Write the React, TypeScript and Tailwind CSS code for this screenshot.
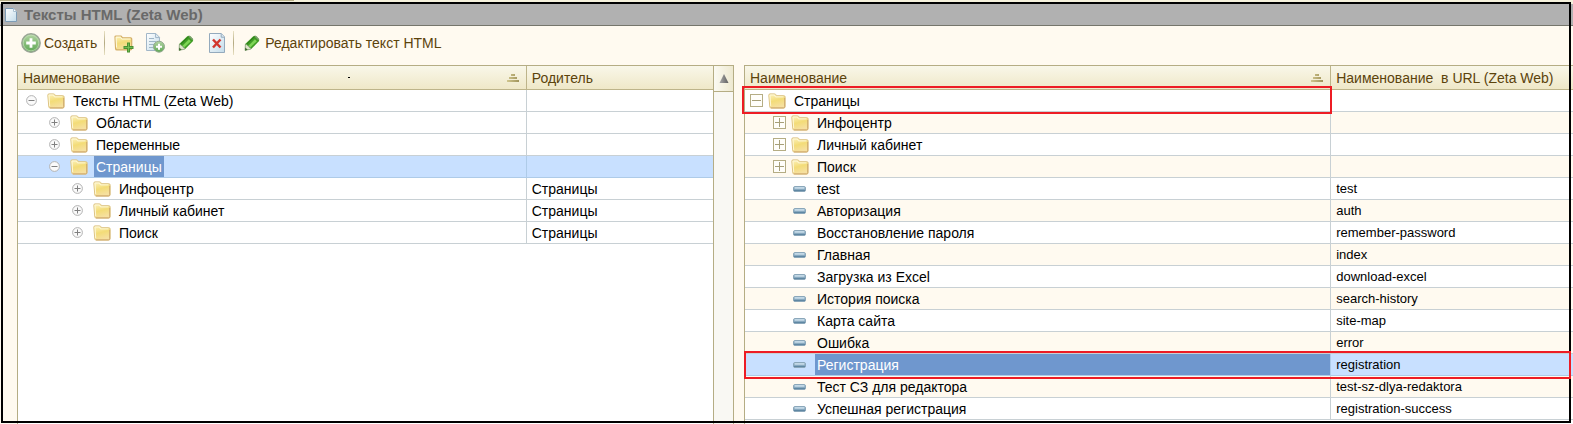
import { ReactNode } from "react";

type Row = {
  name: string;
  value?: string;
  level: number;
  kind: "open" | "closed" | "leaf";
  selected?: boolean;
  marked?: boolean;
};

const sections: Row[] = [
  { name: "Тексты HTML (Zeta Web)", level: 0, kind: "open" },
  { name: "Области", level: 1, kind: "closed" },
  { name: "Переменные", level: 1, kind: "closed" },
  { name: "Страницы", level: 1, kind: "open", selected: true },
  { name: "Инфоцентр", value: "Страницы", level: 2, kind: "closed" },
  { name: "Личный кабинет", value: "Страницы", level: 2, kind: "closed" },
  { name: "Поиск", value: "Страницы", level: 2, kind: "closed" },
];

const pages: Row[] = [
  { name: "Страницы", level: 0, kind: "open", marked: true },
  { name: "Инфоцентр", level: 1, kind: "closed" },
  { name: "Личный кабинет", level: 1, kind: "closed" },
  { name: "Поиск", level: 1, kind: "closed" },
  { name: "test", value: "test", level: 1, kind: "leaf" },
  { name: "Авторизация", value: "auth", level: 1, kind: "leaf" },
  { name: "Восстановление пароля", value: "remember-password", level: 1, kind: "leaf" },
  { name: "Главная", value: "index", level: 1, kind: "leaf" },
  { name: "Загрузка из Excel", value: "download-excel", level: 1, kind: "leaf" },
  { name: "История поиска", value: "search-history", level: 1, kind: "leaf" },
  { name: "Карта сайта", value: "site-map", level: 1, kind: "leaf" },
  { name: "Ошибка", value: "error", level: 1, kind: "leaf" },
  { name: "Регистрация", value: "registration", level: 1, kind: "leaf", selected: true, marked: true },
  { name: "Тест СЗ для редактора", value: "test-sz-dlya-redaktora", level: 1, kind: "leaf" },
  { name: "Успешная регистрация", value: "registration-success", level: 1, kind: "leaf" },
];

const indent = ["pl-0", "pl-[23px]", "pl-[46px]"];

function Gradients() {
  return (
    <svg className="absolute size-0" aria-hidden="true">
      <defs>
        <linearGradient id="folder" x1="0" y1="0" x2="0.3" y2="1">
          <stop offset="0" stopColor="#fdf3c0" />
          <stop offset="0.55" stopColor="#f3dc78" />
          <stop offset="1" stopColor="#f6e0a0" />
        </linearGradient>
        <linearGradient id="sheet" x1="0" y1="0" x2="1" y2="1">
          <stop offset="0" stopColor="#ffffff" />
          <stop offset="1" stopColor="#c3dcea" />
        </linearGradient>
        <linearGradient id="green" x1="0" y1="0" x2="0" y2="1">
          <stop offset="0" stopColor="#b4d6a4" />
          <stop offset="1" stopColor="#5da653" />
        </linearGradient>
        <linearGradient id="bar" x1="0" y1="0" x2="0" y2="1">
          <stop offset="0" stopColor="#c4dbe9" />
          <stop offset="1" stopColor="#5f87a3" />
        </linearGradient>
        <linearGradient id="sort" x1="0" y1="0" x2="1" y2="0">
          <stop offset="0" stopColor="#d0c68e" />
          <stop offset="1" stopColor="#a0935a" />
        </linearGradient>
        <linearGradient id="arrow" x1="0" y1="0" x2="1" y2="0">
          <stop offset="0" stopColor="#a8a8a8" />
          <stop offset="1" stopColor="#606060" />
        </linearGradient>
      </defs>
    </svg>
  );
}

function Folder() {
  return (
    <svg className="block h-4 w-[18px] shrink-0" viewBox="0 0 18 16" aria-hidden="true">
      <path d="M.8 2.2Q.8.9 2 .9h4.6q.9 0 1.3.8l.5 1h7.4q1.3 0 1.3 1.2v9.8q0 1.4-1.4 1.4H3.2q-1.3 0-1.4-1.3Z" fill="url(#folder)" stroke="#dcc384" />
      <path d="M2.7 13.2 2 2.4q0-.4.4-.4h4l1.1 1.9h8" fill="none" stroke="#fffbe0" strokeWidth="0.9" />
      <path d="M3 14.9h12.5q1.2 0 1.2-1.2V5" fill="none" stroke="#cfa96c" />
    </svg>
  );
}

function Leaf() {
  return (
    <svg className="block h-4 w-[18px] shrink-0" viewBox="0 0 18 16" aria-hidden="true">
      <rect x="2.5" y="5.5" width="12" height="5" rx="1.5" fill="url(#bar)" stroke="#8ba7ba" />
      <path d="M4 7h9" stroke="#d5e6f1" />
      <path d="M3 9.500h11" stroke="#5f87a3" />
    </svg>
  );
}

function Toggle({ open, square, name }: { open: boolean; square: boolean; name: string }) {
  return (
    <button type="button" aria-label={name} aria-expanded={open} className="block shrink-0">
      {square ? (
        <svg className="block size-[13px]" viewBox="0 0 13 13">
          <rect x="0.5" y="0.5" width="12" height="12" fill="#fffefa" stroke="#b5ad84" />
          <path d={open ? "M2 6.5h9" : "M2 6.5h9M6.5 2v9"} stroke="#a69f78" />
        </svg>
      ) : (
        <svg className="block size-[13px]" viewBox="0 0 13 13">
          <circle cx="6.5" cy="6.5" r="4.9" fill="#fafafa" stroke="#b3b3b3" />
          <path d={open ? "M3.5 6.5h6" : "M3.5 6.5h6M6.5 3.5v6"} stroke="#808080" />
        </svg>
      )}
    </button>
  );
}

function Sheet({ children }: { children?: ReactNode }) {
  return (
    <svg className="block size-5" viewBox="0 0 20 20" aria-hidden="true">
      <path d="M2.5.5h11.8l3.2 3.4v15.6h-15Z" fill="url(#sheet)" stroke="#94aabd" />
      <path d="M14.2.7v3.5h3.2" fill="#dbe9f1" stroke="#94aabd" />
      {children}
    </svg>
  );
}

function Pencil() {
  return (
    <svg className="block size-4" viewBox="0 0 16 16" aria-hidden="true">
      <path d="M1 15.500 1.200 9 9.300 1.200q1.500-1.200 3.200.3l2 2q1.400 1.600.1 3L7.200 14Z" fill="#3f9b24" />
      <path d="M4.200 11 10.900 4.200l2 2-6.600 6.400Z" fill="#7ed555" />
      <path d="m2.600 9.200 8-7.600" stroke="#277718" strokeWidth="0.9" />
      <path d="M1 15.500 1.300 9.500q1.800-.2 2.300 1.200 1.500.2 1.500 1.600 1.500.3 2 1.700Z" fill="#dfe5cb" stroke="#829477" strokeWidth="0.6" />
      <path d="m1 15.500.2-3 2.600 2.300Z" fill="#3d6b2d" />
      <path d="m11 1 3.800 3.800" stroke="#7d9d70" strokeWidth="1.400" />
    </svg>
  );
}

function Sort() {
  return (
    <svg className="block h-2 w-3 shrink-0" viewBox="0 0 12 8" aria-hidden="true">
      <path d="M4 0h4v2H4zM2 3h8v2H2zM0 6h12v2H0z" fill="url(#sort)" />
    </svg>
  );
}

function Divider() {
  return <span className="h-6 w-px bg-linear-to-b from-[#e9e2c4] via-[#b3a981] to-[#e9e2c4]" />;
}

function HeadCell({ label, sorted, dot, last }: { label: string; sorted?: boolean; dot?: boolean; last?: boolean }) {
  return (
    <th
      scope="col"
      className={`relative h-6 border-b border-[#bdb48a] bg-linear-to-b from-[#f9f7e9] to-[#efe8c8] p-0 text-left font-normal text-[#5c430c] ${last ? "" : "border-r"}`}
    >
      <span className="flex items-center justify-between pr-[7px] pl-[5px]">
        <span className="whitespace-pre">{label}</span>
        {sorted && <Sort />}
      </span>
      {dot && <span className="absolute top-[11px] left-[65%] h-px w-[2px] bg-black" />}
    </th>
  );
}

function TreeTable({ rows, columns, list }: { rows: Row[]; columns: [string, string]; list?: boolean }) {
  return (
    <table className="w-full table-fixed border-separate border-spacing-0 text-[14px] leading-5">
      <colgroup>
        <col className={list ? "w-[70.8%]" : "w-[73.2%]"} />
        <col />
      </colgroup>
      <thead>
        <tr>
          <HeadCell label={columns[0]} sorted dot={!list} />
          <HeadCell label={columns[1]} last />
        </tr>
      </thead>
      <tbody>
        {rows.map((row, i) => {
          const fill = row.selected ? "bg-[#c8e0ff]" : list && i % 2 === 1 ? "bg-[#fffaf0]" : "bg-white";
          const line = row.selected ? "border-[#aecbe8]" : "border-[#c8d0d4]";
          const picked = row.selected ? "bg-[#6f97ce] text-white" : "";
          return (
            <tr key={row.name} className={`relative ${fill}`}>
              <td className={`h-[22px] border-r border-b p-0 ${line} ${row.marked && !row.selected ? "relative" : ""}`}>
                <span className={`flex items-center ${indent[row.level]}`}>
                  <span className={`flex items-center ${list ? "gap-[5px] pl-[5px]" : "gap-[9px] pl-[7px]"}`}>
                    {row.kind === "leaf" ? (
                      <span className="w-[13px]" />
                    ) : (
                      <Toggle open={row.kind === "open"} square={!!list} name={row.name} />
                    )}
                    {row.kind === "leaf" ? <Leaf /> : <Folder />}
                  </span>
                  <span className={`h-[21px] pt-px whitespace-nowrap ${list ? "ml-[6px] flex-1 pl-[2px]" : "ml-[6px] px-[2px]"} ${picked}`}>
                    {row.name}
                  </span>
                </span>
                {row.marked && (
                  <span
                    className={`pointer-events-none absolute z-10 border-2 border-[#ed1c24] ${row.selected ? "-top-[3px] right-[2px] -bottom-[3px] -left-px" : "-top-1 -right-[2px] -bottom-[3px] -left-[3px]"}`}
                  />
                )}
              </td>
              <td className={`h-[22px] truncate border-b p-0 pt-px pl-[5px] ${list ? "text-[13px]" : ""} ${line}`}>
                {row.value}
              </td>
            </tr>
          );
        })}
      </tbody>
    </table>
  );
}

export default function App() {
  return (
    <div
      className="relative flex h-screen flex-col overflow-hidden bg-[#fffaf0] text-black"
      style={{ fontFamily: '"Liberation Sans", Arial, sans-serif' }}
    >
      <Gradients />
      <div className="h-1 shrink-0 bg-[#f5f1dc]">
        <div className="h-px w-[294px] bg-[#b5ad84]" />
      </div>
      <header className="flex h-[22px] shrink-0 items-center gap-[7px] border-b border-[#76766c] bg-[#b1b1b1] pl-[5px]">
        <svg className="block h-[14px] w-3" viewBox="0 0 12 14" aria-hidden="true">
          <path d="M.5.5h8l3 3v10H.5Z" fill="url(#sheet)" stroke="#7e9db7" />
          <path d="M8.5.5v3h3" fill="#fff" stroke="#a9c0d1" />
        </svg>
        <h1 className="text-[15px] leading-5 font-bold text-[#696969]">Тексты HTML (Zeta Web)</h1>
      </header>

      <div role="toolbar" className="flex h-[39px] shrink-0 items-center pb-[5px] pl-[21px] text-[14px] text-[#5c430c]">
        <button type="button" className="flex items-center gap-[3px] pr-[7px]">
          <svg className="block size-5" viewBox="0 0 20 20" aria-hidden="true">
            <circle cx="10" cy="10" r="9.2" fill="url(#green)" stroke="#9aa596" strokeWidth="1.4" />
            <circle cx="10" cy="10" r="7.8" fill="none" stroke="#c4dfb9" strokeWidth="0.7" />
            <path d="M10 5.2v9.6M5.2 10h9.6" stroke="#fff" strokeWidth="2.8" />
          </svg>
          Создать
        </button>
        <Divider />
        <div className="flex items-center gap-[11px] pr-[6px] pl-[9px]">
          <button type="button" aria-label="Создать группу">
            <svg className="block size-5" viewBox="0 0 20 20" aria-hidden="true">
              <path d="M1 3.8Q1 3 2 3h4.7q.8 0 1.1.7l.6 1.1h8.2q1.1 0 1.1 1v9.7q0 1.4-1.3 1.4H3Q1.7 16.900 1.600 15.600Z" fill="url(#folder)" stroke="#d3ae66" strokeWidth="1.2" />
              <path d="m2.500 14.500-.4-10.300h4.400l1.200 1.800h8.800" fill="none" stroke="#fffbe0" />
              <path d="M14.500 9.500v10M9.500 14.500h10" stroke="#4a9231" strokeWidth="3" />
              <path d="M14.500 10.500v8M10.500 14.500h8" stroke="#7bc65c" strokeWidth="0.800" />
            </svg>
          </button>
          <button type="button" aria-label="Скопировать">
            <svg className="block size-5" viewBox="0 0 20 20" aria-hidden="true">
              <path d="M1.500.5h9.300l3.700 3.800v13.200h-13Z" fill="url(#sheet)" stroke="#a2b7c8" />
              <path d="M10.600.6v4h3.900M4 5.500h5M4 8.500h7M4 11.500h5M4 14.500h4" fill="none" stroke="#9fb6c7" />
              <circle cx="14" cy="13.700" r="5.500" fill="url(#green)" stroke="#93a98f" />
              <path d="M14 10.700v6M11 13.700h6" stroke="#fff" strokeWidth="2" />
            </svg>
          </button>
          <button type="button" aria-label="Изменить" className="px-[2px]">
            <Pencil />
          </button>
          <button type="button" aria-label="Удалить">
            <Sheet>
              <path d="m6 6.500 7.500 8M13.500 6.500 6 14.500" stroke="#d2372e" strokeWidth="2.500" />
            </Sheet>
          </button>
        </div>
        <Divider />
        <button type="button" className="flex items-center gap-[5px] pl-[10px]">
          <Pencil />
          Редактировать текст HTML
        </button>
      </div>

      <main className="grid min-h-0 flex-1 grid-cols-[717fr_829fr] gap-[10px] pl-[17px]">
        <section className="flex min-w-0 border border-b-0 border-[#b5ad84] bg-white">
          <div className="min-w-0 flex-1">
            <TreeTable rows={sections} columns={["Наименование", "Родитель"]} />
          </div>
          <div className="w-5 shrink-0 border-l border-[#b5ad84] bg-[#f9f8f3]">
            <button
              type="button"
              aria-label="Прокрутить вверх"
              className="flex h-[26px] w-full items-center justify-center border-b border-[#b5ad84] bg-linear-to-r from-[#fbfaf2] to-[#eee9d0]"
            >
              <svg className="block h-[9px] w-[10px]" viewBox="0 0 10 9">
                <path d="M5 0 9.500 9h-9Z" fill="url(#arrow)" />
              </svg>
            </button>
          </div>
        </section>
        <section className="min-w-0 border-t border-l border-[#b5ad84] bg-white">
          <TreeTable rows={pages} columns={["Наименование", "Наименование  в URL (Zeta Web)"]} list />
        </section>
      </main>

      <div className="pointer-events-none absolute top-[2px] right-[2px] bottom-px left-px z-0 border-2 border-black" />
    </div>
  );
}
